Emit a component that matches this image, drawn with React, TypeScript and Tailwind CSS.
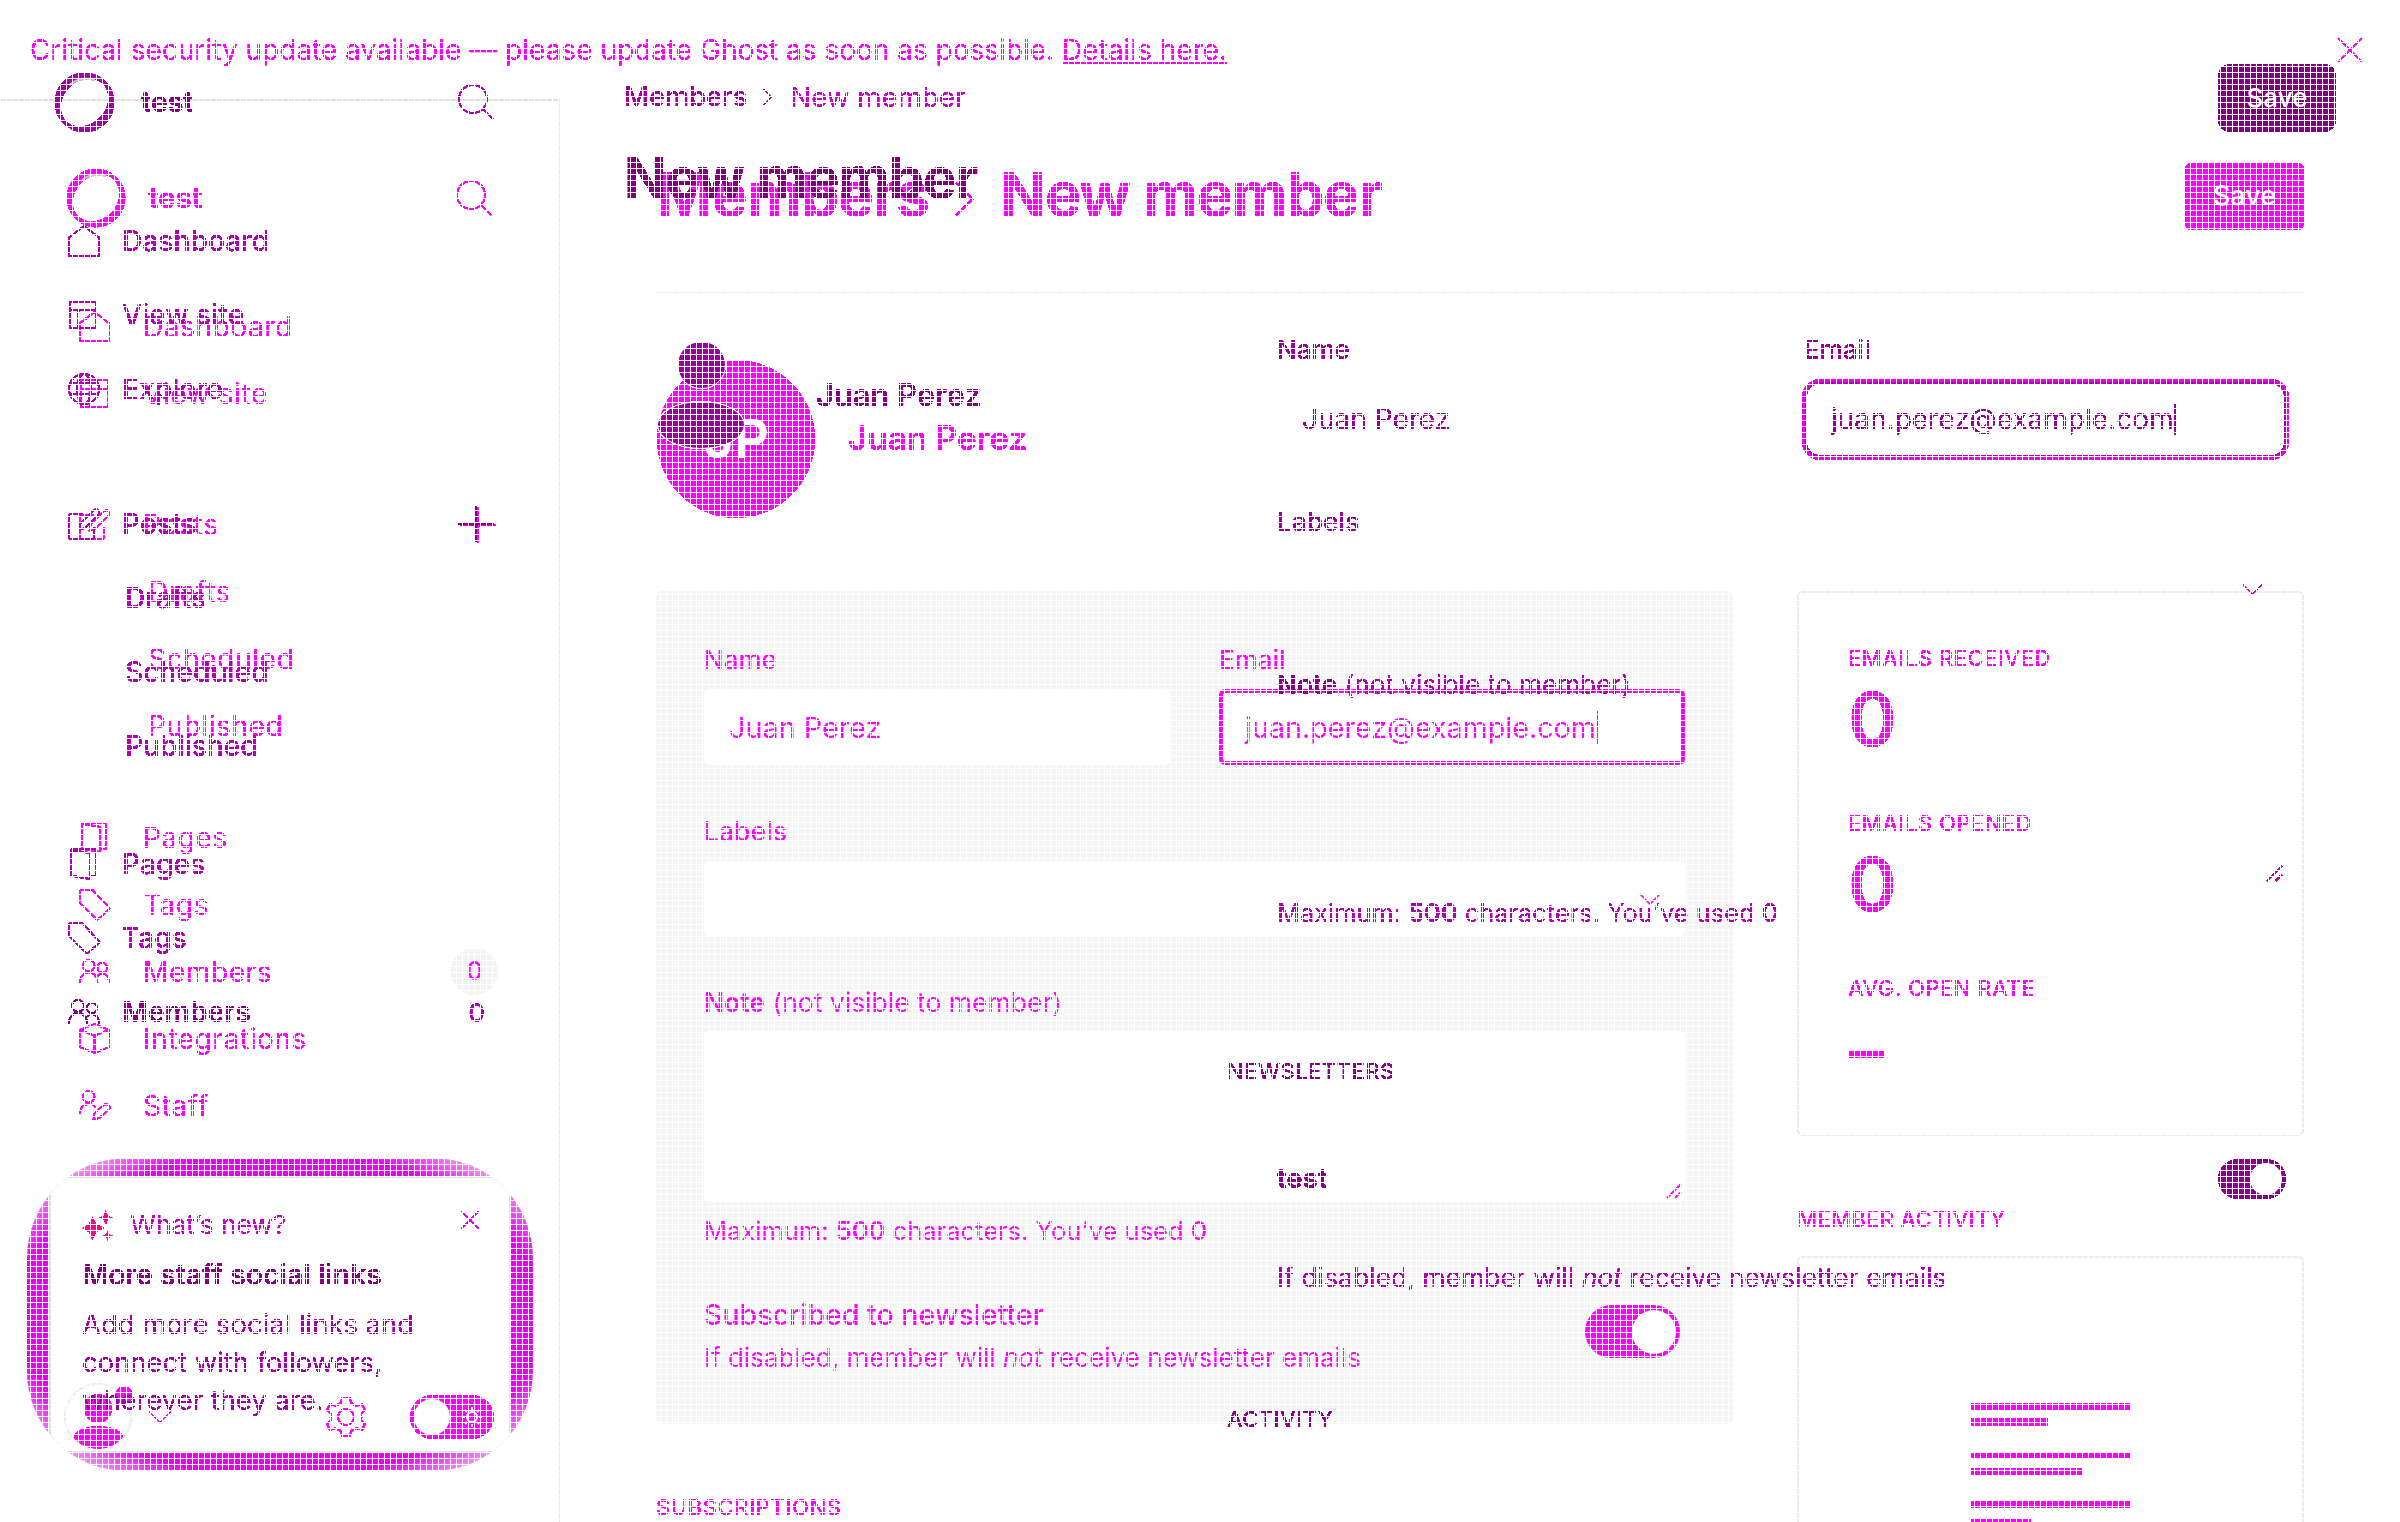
import type { ReactNode } from 'react';

type IconProps = { className?: string };

function Svg({ className = '', box = 32, children }: { className?: string; box?: number; children: ReactNode }) {
  return (
    <svg className={`block shrink-0 overflow-visible ${className}`} viewBox={`0 0 ${box} ${box}`} fill="none" stroke="currentColor" strokeWidth={2}>
      {children}
    </svg>
  );
}

const HomeIcon = ({ className }: IconProps) => (
  <Svg className={className}><path d="M1 12.5 16 1l15 11.5V31H1z" /></Svg>
);
const SiteIcon = ({ className }: IconProps) => (
  <Svg className={className}><path d="M2 2h28v28H2zM2 11h28M11 11v19" /></Svg>
);
const GlobeIcon = ({ className }: IconProps) => (
  <Svg className={className}><circle cx="16" cy="16" r="15" /><ellipse cx="16" cy="16" rx="7" ry="15" /><path d="M3 10h26M3 21h26" /></Svg>
);
const PenIcon = ({ className }: IconProps) => (
  <Svg className={className}><path d="M15 6H3a2 2 0 0 0-2 2v21a2 2 0 0 0 2 2h21a2 2 0 0 0 2-2V19M12 16 26 2q3-2 5 1 1 2-1 4L17 20l-6 2z" /></Svg>
);
const PagesIcon = ({ className }: IconProps) => (
  <Svg className={className}><path d="M3 2l19 3v26L5 28q-2 0-2-2zM3 1h24q1 0 1 1v26h-6" /></Svg>
);
const TagIcon = ({ className }: IconProps) => (
  <Svg className={className}><path d="M1 3q0-2 2-2h11l17 18q1 1 0 2L20 31q-1 1-2 0L1 14z" /></Svg>
);
const MembersIcon = ({ className }: IconProps) => (
  <Svg className={className}><circle cx="10" cy="10" r="6" /><circle cx="24" cy="12" r="5" /><path d="M1 28c0-15 18-15 18 0M19 21c3-5 12-4 12 7" /></Svg>
);
const CubeIcon = ({ className }: IconProps) => (
  <Svg className={className}><path d="M1 7 16 1l15 6v18l-15 6-15-6zM1 7l15 6 15-6M16 13v18" /></Svg>
);
const StaffIcon = ({ className }: IconProps) => (
  <Svg className={className}><circle cx="10" cy="7" r="6" /><path d="M1 25c0-12 13-13 16-7M15 30l1-6 10-9q3-1 5 1t0 4l-10 9z" /></Svg>
);
const SearchIcon = ({ className }: IconProps) => (
  <Svg className={className} box={36}><circle cx="15" cy="15" r="14" /><path d="m25 25 10 10" /></Svg>
);
const PlusIcon = ({ className }: IconProps) => (
  <Svg className={className} box={36}><path d="M18 0v36M0 18h36" strokeWidth={2.4} /></Svg>
);
const CrossIcon = ({ className }: IconProps) => (
  <Svg className={className} box={24}><path d="m0 0 24 24M24 0 0 24" strokeWidth={1.6} /></Svg>
);
const ChevronDown = ({ className }: IconProps) => (
  <Svg className={className} box={20}><path d="m0 5 10 10 10-10" strokeWidth={1.6} /></Svg>
);
const ChevronRight = ({ className }: IconProps) => (
  <Svg className={className} box={20}><path d="m5 1 9 9-9 9" strokeWidth={1.4} /></Svg>
);
const ResizeGrip = ({ className }: IconProps) => (
  <Svg className={className} box={14}><path d="M0 14 14 0M8 14l6-6" /></Svg>
);
const GearIcon = ({ className }: IconProps) => (
  <Svg className={className} box={40}>
    <circle cx="20" cy="20" r="8" />
    <path d="M16 1h8l1 5q3 1 5 3l6-2 3 6-4 4q1 3 0 6l4 4-3 6-6-2q-2 2-5 3l-1 5h-8l-1-5q-3-1-5-3l-6 2-3-6 4-4q-1-3 0-6l-4-4 3-6 6 2q2-2 5-3z" />
  </Svg>
);
const SparkleIcon = ({ className }: IconProps) => (
  <svg className={`block shrink-0 ${className}`} viewBox="0 0 30 30" fill="currentColor">
    <path d="M10 6 14 13.5 22 17.500 14 21.500 10 29 6.500 21.500 0 17.500 6.500 13.500zM23 0l2 5.500 5 2-5 2-2 5.500-2-5.500-5-2 5-2zM25 20l1.500 3.500 3.500 1.500-3.500 1.500-1.500 3.500-1.500-3.500-3.500-1.500 3.500-1.500z" />
  </svg>
);
const RingLogo = ({ className }: IconProps) => (
  <svg className={`block shrink-0 overflow-visible ${className}`} viewBox="0 0 60 60" fill="none">
    <path
      d="M30 0.500a29.500 29.500 0 1 0 0 59a29.500 29.500 0 1 0 0-59zM11.900 48.700A26 21.500 -46 1 0 48.100 11.300A26 21.500 -46 1 0 11.900 48.700z"
      fill="currentColor"
      fillRule="evenodd"
    />
    <ellipse cx="30" cy="30" rx="27" ry="22.5" transform="rotate(-46 30 30)" stroke="currentColor" strokeWidth="3" />
    <path d="M15 13Q25 4 40 8" stroke="#d0c0d0" strokeWidth="2" />
  </svg>
);

function NavA({ icon, label, children }: { icon?: ReactNode; label: string; children?: ReactNode }) {
  return (
    <li className="flex h-[67px] items-center pl-[79px]">
      {icon ? <span className="w-[64px]">{icon}</span> : <span className="w-[69px]" />}
      <span className="text-[28px] leading-10 tracking-[0.6px]">{label}</span>
      {children}
    </li>
  );
}

function NavB({ icon, label, strong, children }: { icon?: ReactNode; label: string; strong?: boolean; children?: ReactNode }) {
  return (
    <li className={`flex h-[74px] items-center pl-[68px] ${strong ? 'font-semibold text-[#850085]' : 'font-medium'}`}>
      {icon ? <span className="w-[54px]">{icon}</span> : <span className="w-[57px]" />}
      <span className="text-[28.200px] leading-10">{label}</span>
      {children}
    </li>
  );
}

function Stat({ label, value }: { label: string; value: string }) {
  return (
    <div className="h-[165px]">
      <div className="text-[22px] font-medium leading-7 tracking-[0.5px]">{label}</div>
      <div className="mt-[7px] text-[74px] font-semibold leading-[80px]">{value}</div>
    </div>
  );
}

function PageA() {
  return (
    <div className="flex h-full flex-col text-[#ff00ff] [filter:url(#crisp)]">
      <header className="flex h-[99px] shrink-0 items-center justify-between pl-[30px] pr-[38px] text-[28px]">
        <p className="whitespace-nowrap">
          Critical security update available — please update Ghost as soon as possible.{' '}
          <span className="underline decoration-2 underline-offset-[2px]">Details here.</span>
        </p>
        <CrossIcon className="size-6" />
      </header>
      <div className="flex min-h-0 grow">
        <aside className="w-[560px] shrink-0 border-r border-t-2 border-r-[#e8e8e8] border-t-[#e0e0e0]">
          <div className="mt-[67px] flex h-[60px] items-center pl-[66px]">
            <RingLogo className="size-[60px]" />
            <span className="ml-[22px] text-[29px] font-bold">test</span>
            <SearchIcon className="ml-auto mr-[67px] size-9" />
          </div>
          <ul className="mt-[65px]">
            <NavA icon={<HomeIcon className="size-[31px]" />} label="Dashboard" />
            <NavA icon={<SiteIcon className="size-[31px]" />} label="View site" />
          </ul>
          <ul className="mt-[64px]">
            <NavA icon={<PenIcon className="size-[31px]" />} label="Posts">
              <PlusIcon className="ml-auto mr-[63px] size-9" />
            </NavA>
            <NavA label="Drafts" />
            <NavA label="Scheduled" />
            <NavA label="Published" />
          </ul>
          <ul className="mt-[45px]">
            <NavA icon={<PagesIcon className="size-[31px]" />} label="Pages" />
            <NavA icon={<TagIcon className="size-[31px]" />} label="Tags" />
            <NavA icon={<MembersIcon className="size-[31px]" />} label="Members">
              <span className="ml-auto mr-[61px] flex size-[47px] items-center justify-center rounded-full bg-[#f2f3f5] text-[25px] font-medium">0</span>
            </NavA>
            <NavA icon={<CubeIcon className="size-[31px]" />} label="Integrations" />
            <NavA icon={<StaffIcon className="size-[31px]" />} label="Staff" />
          </ul>
          <div className="mt-[244px] flex h-[68px] items-center pl-[64px]">
            <div className="relative size-[68px]">
              <div className="flex size-[68px] flex-col items-center overflow-hidden rounded-full border-2 border-[#eeeeee] pt-[9px]">
                <div className="h-[29px] w-[28px] shrink-0 rounded-full bg-[#ff00ff]" />
                <div className="mt-[3px] h-[23px] w-[49px] shrink-0 rounded-[50%] bg-[#ff00ff]" />
              </div>
              <span className="absolute -right-px top-[3px] size-[18px] rounded-full bg-[#ff00ff]" />
            </div>
            <ChevronDown className="ml-[17px] size-[22px]" />
            <GearIcon className="ml-[155px] size-[40px]" />
            <div className="ml-[44px] flex h-[44px] w-[84px] items-center rounded-full bg-[#ff00ff] px-1">
              <span className="size-[36px] rounded-full bg-white" />
              <Svg className="ml-[12px] size-[20px] text-white" box={20}>
                <circle cx="10" cy="10" r="5" />
                <path d="M10 0v3M10 17v3M0 10h3M17 10h3M3 3l2 2M15 15l2 2M3 17l2-2M15 5l2-2" />
              </Svg>
            </div>
          </div>
        </aside>
        <main className="min-w-0 grow px-24 pt-[64px]">
          <div className="flex h-[130px] items-start justify-between border-b border-[#eaeaea]">
            <h1 className="flex items-center text-[61px] font-bold leading-[62px] tracking-[-1.4px]">
              Members
              <ChevronRight className="ml-[18px] mr-[17px] mt-[10px] size-[36px]" />
              New member
            </h1>
            <button className="h-[67px] w-[119px] rounded-md bg-[#ff00ff] text-[27px] font-medium text-white">Save</button>
          </div>
          <div className="mt-[67px] flex h-[157px] items-center pl-px">
            <div className="flex size-[158px] items-center justify-center rounded-full bg-[#ff00ff] text-[54px] font-semibold text-white">JP</div>
            <h2 className="ml-[33px] text-[33.400px] font-semibold">Juan Perez</h2>
          </div>
          <div className="mt-[74px] flex gap-16">
            <div className="w-[1077px] shrink-0">
              <section className="h-[833px] rounded-md bg-[#f4f6f6] pl-[48px] pr-[48px] pt-[49px] text-[26px]">
                <div className="grid grid-cols-2 gap-x-[49px]">
                  <div>
                    <div className="h-10 font-medium leading-10">Name</div>
                    <div className="mt-[9px] flex h-[76px] items-center rounded-md bg-white pl-[25px] pt-px text-[28.800px]">Juan Perez</div>
                  </div>
                  <div>
                    <div className="h-10 font-medium leading-10">Email</div>
                    <div className="mt-[9px] flex h-[76px] items-center rounded-md border-4 border-[#ff00ff] bg-white pl-[22px] pt-px text-[28.700px]">
                      juan.perez@example.com
                      <span className="h-[34px] w-0.5 bg-[#ff00ff]" />
                    </div>
                  </div>
                </div>
                <div className="mt-[46px] h-10 text-[26.500px] font-medium leading-10">Labels</div>
                <div className="mt-[10px] flex h-[76px] items-center justify-end rounded-md bg-white pr-[25px]">
                  <ChevronDown className="size-[20px]" />
                </div>
                <div className="mt-[45px] h-10 text-[26.500px] leading-10"><span className="font-semibold">Note</span> (not visible to member)</div>
                <div className="mt-[9px] flex h-[171px] items-end justify-end rounded-md bg-white p-1"><ResizeGrip className="size-[14px]" /></div>
                <p className="mt-[11px] text-[25.500px] leading-9">Maximum: <b className="font-semibold">500</b> characters. You’ve used <span className="font-medium">0</span></p>
                <div className="mt-[46px] flex items-start justify-between">
                  <div>
                    <div className="text-[28.500px] font-medium leading-10">Subscribed to newsletter</div>
                    <div className="mt-[5px] leading-9">If disabled, member will <i>not</i> receive newsletter emails</div>
                  </div>
                  <div className="mr-[5px] mt-[10px] flex h-[53px] w-[95px] items-center justify-end rounded-full bg-[#ff00ff] px-1">
                    <span className="size-[44px] rounded-full bg-white" />
                  </div>
                </div>
              </section>
              <h3 className="mt-[69px] text-[22px] font-medium leading-7 tracking-[0.6px]">SUBSCRIPTIONS</h3>
            </div>
            <div className="grow">
              <section className="h-[545px] rounded-md border-2 border-[#ececec] pl-[49px] pt-[51px]">
                <Stat label="EMAILS RECEIVED" value="0" />
                <Stat label="EMAILS OPENED" value="0" />
                <Stat label="AVG. OPEN RATE" value="–" />
              </section>
              <h3 className="mt-[69px] text-[22px] font-medium leading-7 tracking-[0.3px]">MEMBER ACTIVITY</h3>
              <section className="mt-[23px] h-[290px] rounded-t-md border-2 border-b-0 border-[#ececec] pl-[172px] pt-[145px]">
                <div className="h-[7px] w-[159px] bg-[#ff00ff]" />
                <div className="mt-[8px] h-[8px] w-[77px] bg-[#ff00ff]" />
                <div className="mt-[26px] h-[6px] w-[159px] bg-[#ff00ff]" />
                <div className="mt-[10px] h-[7px] w-[111px] bg-[#ff00ff]" />
                <div className="mt-[25px] h-[8px] w-[159px] bg-[#ff00ff]" />
                <div className="mt-[10px] h-[8px] w-[60px] bg-[#ff00ff]" />
              </section>
            </div>
          </div>
        </main>
      </div>
    </div>
  );
}

function PageB() {
  return (
    <div className="absolute inset-0 flex overflow-hidden text-[#b000b4] [filter:url(#crisp)]">
      <aside className="w-[560px] shrink-0 pt-[72px]">
        <div className="flex h-[60px] items-center pl-[54px] text-[#a400a8]">
          <RingLogo className="size-[61px]" />
          <span className="ml-[26px] text-[28px] font-bold text-[#850085]">test</span>
          <SearchIcon className="ml-auto mr-[66px] size-9 text-[#b000b4]" />
        </div>
        <ul className="mt-[72px]">
          <NavB icon={<HomeIcon className="size-8" />} label="Dashboard" />
          <NavB icon={<SiteIcon className="size-[30px]" />} label="View site" />
          <NavB icon={<GlobeIcon className="size-8" />} label="Explore" />
        </ul>
        <ul className="mt-[61px]">
          <NavB icon={<PenIcon className="size-8" />} label="Posts">
            <PlusIcon className="ml-auto mr-[66px] size-9 text-[#8a008a]" />
          </NavB>
          <NavB label="Drafts" />
          <NavB label="Scheduled" />
          <NavB label="Published" />
        </ul>
        <ul className="mt-[44px]">
          <NavB icon={<PagesIcon className="size-8" />} label="Pages" />
          <NavB icon={<TagIcon className="size-8" />} label="Tags" />
          <NavB strong icon={<MembersIcon className="size-8" />} label="Members">
            <span className="ml-auto mr-[75px] text-[26px] font-medium text-[#b000b4]">0</span>
          </NavB>
        </ul>
        <div className="mt-[158px] pl-[82px] pr-[81px] text-[27.400px] text-[#a000a4]">
          <div className="flex h-9 items-center text-[#c400c8]">
            <SparkleIcon className="size-[31px] text-[#ff0090]" />
            <span className="ml-[17px] text-[26.300px]">What’s new?</span>
            <CrossIcon className="-mt-[10px] ml-auto size-[18px] text-[#e600f0]" />
          </div>
          <div className="mt-3 text-[28.400px] font-semibold leading-10 text-[#850085]">More staff social links</div>
          <p className="mt-[10px] whitespace-nowrap leading-[38px]">Add more social links and<br />connect with followers,<br />wherever they are.</p>
        </div>
      </aside>
      <main className="min-w-0 grow pl-16 pr-16 pt-[64px]">
        <div className="flex items-start justify-between">
          <div>
            <nav className="mt-[13px] flex items-center text-[27.300px] leading-10">
              <span className="font-medium text-[#a000a0]">Members</span>
              <ChevronRight className="ml-[12px] mr-[13px] size-[18px]" />
              <span className="text-[27.700px] text-[#c800c8]">New member</span>
            </nav>
            <h1 className="mt-[31px] text-[56px] font-bold leading-[60px] tracking-[-1px] text-[#80007a]">New member</h1>
          </div>
          <button className="h-[68px] w-[118px] rounded-xl bg-[#800080] pb-px text-[26px] font-medium text-white">Save</button>
        </div>
        <div className="mt-[125px] flex pl-[33px]">
          <div className="flex w-[570px] items-start">
            <div className="mt-[8px] w-[88px] shrink-0">
              <div className="ml-[20px] h-[48px] w-[49px] rounded-full border border-white bg-[#9a009c]" />
              <div className="mt-[12px] h-[48px] w-[88px] rounded-[50%] border border-white bg-[#9a009c]" />
            </div>
            <h2 className="ml-[71px] mt-[42px] text-[30.800px] font-semibold leading-10 text-[#850085]">Juan Perez</h2>
          </div>
          <div className="w-[1062px] text-[26px] leading-[34px]">
            <div className="pl-[50px] text-[#960096]">
              <div className="grid grid-cols-[525px_487px]">
                <div>
                  <div className="font-medium">Name</div>
                  <div className="mt-3 flex h-[81px] items-center pb-px pl-[25px] text-[28px]">Juan Perez</div>
                </div>
                <div>
                  <div className="pl-0.5 font-medium">Email</div>
                  <div className="mt-3 h-[81px] rounded-[18px] border-[3px] border-[#ee00ee]">
                    <div className="flex h-full items-center rounded-[15px] border-2 border-[#b400b8] pb-px pl-[24px] text-[28px]">
                      juan.perez@example.com
                      <span className="h-[31px] w-0.5 bg-[#960096]" />
                    </div>
                  </div>
                </div>
              </div>
              <div className="mt-[45px] text-[26.300px] font-medium">Labels</div>
              <div className="mt-[12px] flex h-[78px] items-center justify-end pb-px pr-[27px] text-[#c800c8]"><ChevronDown className="size-[19px]" /></div>
              <div className="mt-[39px] text-[26.200px] text-[#b000b4]"><span className="font-semibold text-[#850085]">Note</span> (not visible to member)</div>
              <div className="flex h-[194px] items-end justify-end pb-[15px] pr-[7px]"><ResizeGrip className="size-[15px] text-[#b000b4]" /></div>
              <p className="text-[25.400px] text-[#b000b4]">Maximum: <b className="font-semibold">500</b> characters. You’ve used <span className="font-medium">0</span></p>
            </div>
            <h3 className="mt-[127px] text-[22px] font-medium leading-7 tracking-[0.5px] text-[#8a008c]">NEWSLETTERS</h3>
            <div className="mt-[74px] flex h-[40px] items-center justify-between pl-[50px] pr-[3px]">
              <span className="text-[27px] font-bold text-[#8a008c]">test</span>
              <div className="flex h-[40px] w-[68px] items-center justify-end rounded-full bg-[#8a008c] px-1"><span className="size-8 rounded-full bg-white" /></div>
            </div>
            <p className="mt-[61px] pl-[50px] text-[26.500px] text-[#b000b4]">If disabled, member will <i>not</i> receive newsletter emails</p>
            <h3 className="mt-[111px] text-[22px] font-medium leading-7 tracking-[0.4px] text-[#8a008c]">ACTIVITY</h3>
          </div>
        </div>
      </main>
    </div>
  );
}

export default function App() {
  return (
    <div className="relative h-[1522px] w-[2400px] overflow-hidden bg-white font-['Inter',sans-serif]">
      <svg className="absolute size-0">
        <filter id="crisp" x="0" y="0" width="100%" height="100%" colorInterpolationFilters="sRGB">
          <feComponentTransfer><feFuncA type="linear" slope="6" intercept="-1.4" /></feComponentTransfer>
        </filter>
      </svg>
      {/* glow around the notice card */}
      <div className="absolute left-[27px] top-[1158px] h-[313px] w-[506px] overflow-hidden rounded-[100px] bg-[radial-gradient(closest-side,#ea00f4_104%,#f080f4_120%)] px-[22px] py-[18px]">
        <div className="h-full w-full rounded-xl border-2 border-[#dddddd] bg-white" />
      </div>
      <div className="relative h-full"><PageA /></div>
      <PageB />
      {/* fine white mesh over the whole canvas */}
      <div className="pointer-events-none absolute inset-0 bg-[linear-gradient(to_right,#fff_1px,transparent_1px),linear-gradient(to_bottom,#fff_1px,transparent_1px)] bg-[size:6px_6px]" />
    </div>
  );
}
